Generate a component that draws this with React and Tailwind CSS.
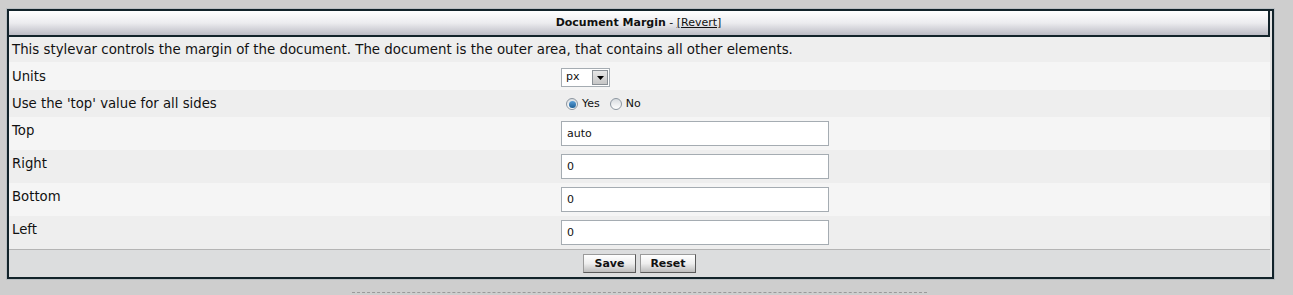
import React from 'react';

const rows = [
  { label: 'Top', value: 'auto', bg: 'bg-[#f5f5f5]' },
  { label: 'Right', value: '0', bg: 'bg-[#eeeeee]' },
  { label: 'Bottom', value: '0', bg: 'bg-[#f5f5f5]' },
  { label: 'Left', value: '0', bg: 'bg-[#eeeeee]' },
];

const Radio = ({ checked }) => (
  <span className="relative inline-flex w-[12px] h-[12px] rounded-full border border-[#8c96a0] bg-gradient-to-b from-[#d8dce0] to-[#ffffff] items-center justify-center">
    {checked && <span className="w-[7px] h-[7px] rounded-full bg-gradient-to-b from-[#5aa0d8] to-[#1d5f96]" />}
  </span>
);

const Button = ({ children, w }) => (
  <button
    className={`${w} h-[19px] border border-[#5a5a5a] border-t-[#9a9a9a] border-l-[#9a9a9a] bg-gradient-to-b from-[#ffffff] via-[#eeeeee] to-[#bdbdbd] text-[11px] font-bold text-[#111] leading-none`}
  >
    {children}
  </button>
);

export default function App() {
  return (
    <div className="min-h-[295px] bg-[#cecece] pt-[9px] font-['DejaVu_Sans',Verdana,sans-serif] text-[#111]">
      <div className="ml-[7px] w-[1267px] border-2 border-[#12232a] bg-[#e4e4e4] shadow-[0_0_0_1px_#b9bec2]">
        <div className="w-[1261px]">
          <div className="h-[26px] border-b-2 border-r-2 border-[#12232a] bg-gradient-to-b from-[#ffffff] via-[#ececef] to-[#bcbcc5] flex items-center justify-center text-[11px]">
            <span className="font-bold">Document Margin</span>
            <span className="whitespace-pre"> - </span>
            <span className="underline">[Revert]</span>
          </div>

          <div className="h-[25px] bg-[#eeeeee] pl-[3px] pt-[5px] text-[13.35px] leading-[16px]">
            This stylevar controls the margin of the document. The document is the outer area, that contains all other elements.
          </div>

          <div className="h-[28px] bg-[#f5f5f5] flex">
            <div className="w-[548px] pl-[3px] pt-[7px] text-[13.25px] leading-[16px]">Units</div>
            <div className="pl-[4px] pt-[6px]">
              <div className="w-[49px] h-[19px] border border-[#a5acb2] bg-white flex items-center justify-between pl-[4px] pr-[1px] text-[11px]">
                <span>px</span>
                <span className="w-[16px] h-[15px] border border-[#8a9096] bg-gradient-to-b from-[#e6e6e6] to-[#c6c6c6] flex items-center justify-center">
                  <svg width="7" height="4" viewBox="0 0 7 4">
                    <path d="M0 0h7L3.5 4z" fill="#000" />
                  </svg>
                </span>
              </div>
            </div>
          </div>

          <div className="h-[27px] bg-[#eeeeee] flex">
            <div className="w-[548px] pl-[3px] pt-[6px] text-[13.25px] leading-[16px]">Use the 'top' value for all sides</div>
            <div className="pl-[9px] pt-[8px] flex items-center gap-[4px] h-[20px] text-[11px]">
              <Radio checked />
              <span className="mr-[6px]">Yes</span>
              <Radio />
              <span>No</span>
            </div>
          </div>

          {rows.map((r) => (
            <div key={r.label} className={`h-[33px] ${r.bg} flex`}>
              <div className="w-[548px] pl-[3px] pt-[6px] text-[13.25px] leading-[16px]">{r.label}</div>
              <div className="pl-[4px] pt-[3px]">
                <input
                  readOnly
                  value={r.value}
                  className="w-[268px] h-[25px] border border-[#a5acb2] bg-white pl-[5px] text-[11px] text-[#111] outline-none font-['DejaVu_Sans',Verdana,sans-serif]"
                />
              </div>
            </div>
          ))}

          <div className="h-[28px] border-t border-[#b4b4b4] bg-[#dcddde] flex items-center justify-center gap-[4px]">
            <Button w="w-[53px]">Save</Button>
            <Button w="w-[56px]">Reset</Button>
          </div>
        </div>
      </div>
      <div className="ml-[352px] mt-[13px] w-[575px] border-t border-dashed border-[#9a9a9a]" />
    </div>
  );
}
